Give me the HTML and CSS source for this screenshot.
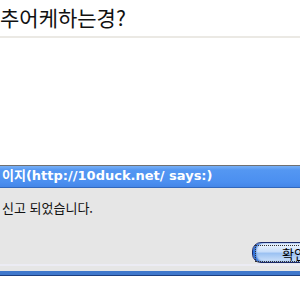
FILE: index.html
```html
<!DOCTYPE html>
<html lang="ko">
<head>
  <meta charset="UTF-8">
  <title>신고</title>
  <link rel="stylesheet" href="styles.css">
</head>
<body>
  <div class="page">
    <h1 class="title">추어케하는경?</h1>
    <div class="rule"></div>
  </div>

  <div class="dialog">
    <div class="caption">이지(http://10duck.net/ says:)</div>
    <div class="body">
      <p class="msg">신고 되었습니다.</p>
      <div class="actions">
        <button class="ok"><span class="focus">확인</span></button>
      </div>
    </div>
    <div class="frame"></div>
  </div>
</body>
</html>
```

FILE: styles.css
```css
html, body { margin: 0; padding: 0; background: #fff; overflow: hidden; width: 300px; height: 300px; }
body { font-family: "DejaVu Sans", "Noto Sans CJK KR", sans-serif; }

.page { height: 165px; }
.title { margin: 0; padding: 5px 0 0 0; font-weight: normal; font-size: 21px; line-height: 25px; color: #111; font-family: "Noto Sans CJK KR", sans-serif; }
.rule { margin-top: 6px; height: 2px; background: #ebe9e4; }

.dialog { width: 320px; border-top: 1px solid #707070; }
.caption { height: 21px; line-height: 20px; padding-left: 2px; color: #fff; font-size: 13px; font-weight: bold; white-space: nowrap;
  background: linear-gradient(#78b0f6 0, #5497f2 4px, #4b8ff0 16px, #4486e8 21px);
  border-bottom: 1px solid #3268bd; }
.body { background: #e6e6e6; height: 76px; border-bottom: 2px solid #ececf4; }
.msg { margin: 0; padding: 12px 0 0 2px; font-size: 13px; line-height: 16px; color: #111; font-family: "Noto Sans CJK KR", sans-serif; }
.actions { display: flex; padding: 26px 0 0 252px; }
.ok { width: 76px; height: 21px; padding: 2px; border: 1px solid #1c2a6a; border-radius: 9px;
  background: linear-gradient(#f2f8ff 0, #c9defa 45%, #9cc2f2 55%, #cfe2fa 100%);
  box-shadow: inset 3px 0 2px #2d6fd8; font-family: "Noto Sans CJK KR", sans-serif; font-size: 13px; color: #000; text-align: left; }
.focus { display: block; height: 15px; line-height: 15px; border: 1px dotted #333; padding-left: 26px; }
.frame { height: 4px; border-top: 5px solid #e6e6e6; background: #4078cc; border-bottom: 1px solid #1d3f80; }
```
